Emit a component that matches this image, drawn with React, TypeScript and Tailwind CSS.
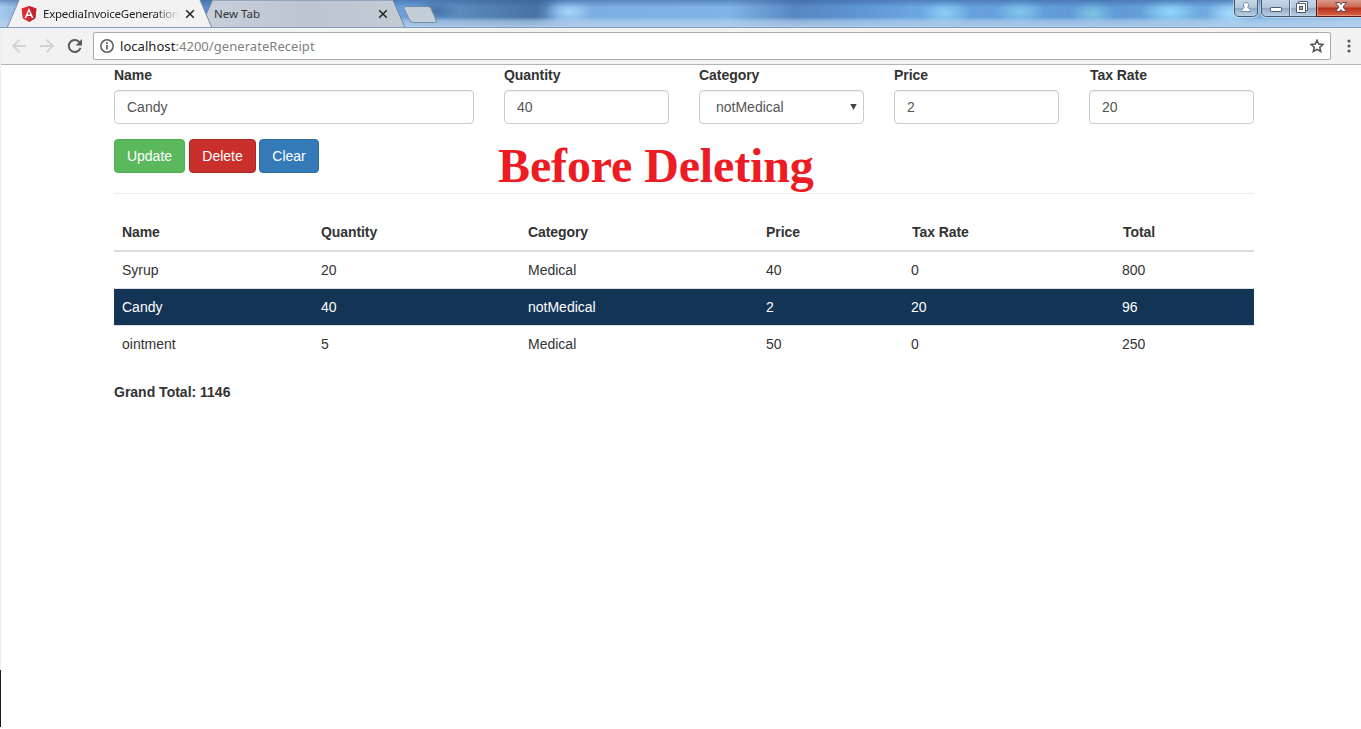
import React from "react";

const fields = [
  { label: "Name", value: "Candy" },
  { label: "Quantity", value: "40" },
  { label: "Category", value: "notMedical", select: true },
  { label: "Price", value: "2" },
  { label: "Tax Rate", value: "20" },
];

const headers = ["Name", "Quantity", "Category", "Price", "Tax Rate", "Total"];

const rows = [
  { cells: ["Syrup", "20", "Medical", "40", "0", "800"], selected: false },
  { cells: ["Candy", "40", "notMedical", "2", "20", "96"], selected: true },
  { cells: ["ointment", "5", "Medical", "50", "0", "250"], selected: false },
];

function CloseIcon() {
  return (
    <svg width="10" height="10" viewBox="0 0 10 10" className="shrink-0">
      <path d="M1.2 1.2L8.8 8.8M8.8 1.2L1.2 8.8" stroke="#222" strokeWidth="1.5" />
    </svg>
  );
}

function AngularIcon() {
  return (
    <svg width="16" height="16" viewBox="0 0 16 16" className="shrink-0">
      <path d="M8 0L15.4 2.6L14.3 12.3L8 15.9L1.7 12.3L.6 2.6Z" fill="#dd2c33" />
      <path d="M8 0L15.4 2.6L14.3 12.3L8 15.9Z" fill="#c3252e" />
      <path d="M8 2L3.5 12.1H5.3L6.2 9.9H9.8L10.7 12.1H12.5ZM8 5.3L9.2 8.4H6.8Z" fill="#fff" fillRule="evenodd" />
    </svg>
  );
}

function WindowButtons() {
  return (
    <svg width="131" height="20" viewBox="0 0 131 20" className="shrink-0">
      <defs>
        <linearGradient id="glass" x1="0" y1="0" x2="0" y2="1">
          <stop offset="0" stopColor="#c6d7e7" />
          <stop offset=".48" stopColor="#b4c9dc" />
          <stop offset=".52" stopColor="#8fa9c3" />
          <stop offset="1" stopColor="#bcd3e8" />
        </linearGradient>
        <linearGradient id="red" x1="0" y1="0" x2="0" y2="1">
          <stop offset="0" stopColor="#dda08f" />
          <stop offset=".45" stopColor="#cc6b55" />
          <stop offset=".52" stopColor="#b8301a" />
          <stop offset="1" stopColor="#d96a4c" />
        </linearGradient>
      </defs>
      <path d="M3.5 -1V12Q3.5 17.5 8.5 17.5H22.5Q28.5 17.5 28.5 12V-1Z" fill="#e1edf8" />
      <path d="M4.5 -1V12Q4.5 16.5 9 16.5H22.5Q27.5 16.5 27.5 12V-1Z" fill="url(#glass)" stroke="#47576b" />
      <path d="M30.5 -1V12Q30.5 17.5 36 17.5H131V-1Z" fill="#e1edf8" />
      <path d="M31.5 -1V12Q31.5 16.5 36.5 16.5H86.5V-1Z" fill="url(#glass)" stroke="#47576b" />
      <path d="M59.5 0V16" stroke="#56677c" />
      <path d="M60.5 0V16" stroke="#dbe7f2" />
      <path d="M86.5 -1V16.5H132V-1Z" fill="url(#red)" stroke="#5b1c17" />
      <path d="M87.5 0V15.5H131" stroke="#eaa893" strokeOpacity=".7" fill="none" />
      <path d="M16 2.5C18.2 2.5 18.9 4.1 18.4 6Q18 7.2 17.6 7.5Q20.5 8.2 20.5 11.5H11.5Q11.5 8.2 14.4 7.5Q14 7.2 13.6 6C13.1 4.1 13.8 2.5 16 2.5Z" fill="#fff" stroke="#76879b" />
      <rect x="40.5" y="7.5" width="11" height="4" rx=".7" fill="#fff" stroke="#505a6a" />
      <path d="M68.5 1.5H77.5V10.5H75.5V12.5H66.5V3.5H68.5Z" fill="#fff" stroke="#505a6a" />
      <path d="M68.5 3.5H75.5V10.5" fill="none" stroke="#505a6a" />
      <rect x="69.5" y="6.5" width="3" height="3" fill="#9eb0c3" stroke="#505a6a" />
      <path d="M105.5 2.5H109.5L111 4.5L112.5 2.5H116.5L113 7L116.5 11.5H112.5L111 9.5L109.5 11.5H105.5L109 7Z" fill="#fff" stroke="#5c4650" />
    </svg>
  );
}

function TabStrip() {
  return (
    <header className="relative flex h-7 items-start overflow-hidden border-b border-[#809dbd] bg-[linear-gradient(to_bottom,rgba(50,90,150,.5)_0,rgba(90,130,180,0)_7px,rgba(184,210,237,0)_17px,rgba(184,210,237,.6)_21px,rgba(184,210,237,.85)_27px),radial-gradient(ellipse_24px_14px_at_569px_12px,#a6d6f9,transparent),radial-gradient(ellipse_26px_14px_at_945px_13px,#8dd0f7,transparent),radial-gradient(ellipse_26px_14px_at_1020px_12px,#82c6ee,transparent),radial-gradient(ellipse_24px_13px_at_1093px_14px,#80c4e4,transparent),radial-gradient(ellipse_30px_14px_at_1170px_12px,#92d8fb,transparent),radial-gradient(ellipse_24px_15px_at_1230px_14px,#a5dcfd,transparent),radial-gradient(ellipse_24px_10px_at_436px_11px,rgba(50,90,140,.6),transparent),linear-gradient(100deg,#aacdf0_0,#91b7e0_20px,#5c8ec9_200px,#6a9fdc_400px,#5686b6_470px,#4773a2_530px,#6c9fd6_552px,#7caee2_575px,#80b4e8_720px,#5787bf_785px,#5c93d2_840px,#6ba6e1_900px,#5e98d5_1090px,#79b2e4_1230px,#a3c4e5_1361px)]">
      <svg width="450" height="28" viewBox="0 0 450 28" className="absolute left-0 top-0">
        <defs>
          <linearGradient id="idle" x1="0" x2="1">
            <stop offset="0" stopColor="#c6cfda" />
            <stop offset=".5" stopColor="#bcc5d0" />
            <stop offset="1" stopColor="#c3ccd5" />
          </linearGradient>
        </defs>
        <path d="M212.5 0H393L405 27.5H211L206 14.5Z" fill="url(#idle)" stroke="#6681a2" />
        <path d="M7 28L19 0H200L212 28Z" fill="#f2f2f2" />
        <path d="M7 28L19 0M200 0L212 28" stroke="#7890ac" fill="none" />
        <path d="M405.5 6.5H428Q430 6.5 431 8.5L436 20Q437 22.5 434.5 22.5H413Q410.5 22.5 409.5 20L404 8.5Q403.5 6.5 405.5 6.5Z" fill="#c3cdd8" stroke="#748aa5" />
      </svg>
      <div className="relative flex h-7 w-[205px] shrink-0 items-center pl-[21px] pr-[10px] font-['Noto_Sans',sans-serif] text-[11.5px] text-[#222]">
        <AngularIcon />
        <span className="ml-1.5 w-[135px] overflow-hidden whitespace-nowrap tracking-[-0.25px] [mask-image:linear-gradient(to_right,black_112px,transparent_137px)]">
          ExpediaInvoiceGeneration
        </span>
        <span className="ml-[7px] flex">
          <CloseIcon />
        </span>
      </div>
      <div className="relative flex h-7 w-[195px] shrink-0 items-center justify-between pl-[9px] pr-[12px] font-['Noto_Sans',sans-serif] text-[11.5px] text-[#333]">
        <span>New Tab</span>
        <CloseIcon />
      </div>
      <div className="relative ml-auto flex">
        <WindowButtons />
      </div>
    </header>
  );
}

function Toolbar() {
  return (
    <div className="flex h-[37px] items-center border-b border-[#b4b4b4] bg-[#f2f2f2] pl-[11px]">
      <svg width="72" height="18" viewBox="0 0 72 18" fill="none" className="shrink-0">
        <path d="M15 9H2.5M8.5 2.7L2.2 9L8.5 15.3" stroke="#d2d2d2" strokeWidth="1.9" />
        <path d="M29 9H41.5M35.5 2.7L41.800 9L35.5 15.3" stroke="#d2d2d2" strokeWidth="1.9" />
        <path d="M68.6 5.4A6 6 0 1 0 69.5 10.7" stroke="#5a5a5a" strokeWidth="2" />
        <path d="M71 2V8.4H64.6Z" fill="#5a5a5a" />
      </svg>
      <div className="ml-[10px] flex h-7 w-[1238px] items-center rounded-[2px] border border-[#aaa] bg-white pl-[6px] pr-[6px]">
        <svg width="14" height="14" viewBox="0 0 14 14" fill="none">
          <circle cx="7" cy="7" r="6.2" stroke="#5a5a5a" strokeWidth="1.5" />
          <path d="M7 6V10.5M7 3.3V4.9" stroke="#5a5a5a" strokeWidth="1.7" />
        </svg>
        <span className="ml-[6px] whitespace-nowrap font-['Noto_Sans',sans-serif] text-[13px] tracking-[0.05px] text-[#808080]">
          <span className="text-[#222]">localhost</span>:4200/generateReceipt
        </span>
        <svg width="14" height="14" viewBox="0 0 14 14" className="ml-auto">
          <path d="M7 1.2L8.7 5.1L13 5.5L9.8 8.3L10.7 12.5L7 10.3L3.3 12.5L4.2 8.3L1 5.5L5.3 5.1Z" fill="none" stroke="#505050" strokeWidth="1.5" />
        </svg>
      </div>
      <svg width="4" height="14" viewBox="0 0 4 14" fill="#5a5a5a" className="ml-4">
        <circle cx="2" cy="2" r="1.6" />
        <circle cx="2" cy="7" r="1.6" />
        <circle cx="2" cy="12" r="1.6" />
      </svg>
    </div>
  );
}

export default function App() {
  return (
    <div className="relative h-[729px] w-[1361px] overflow-hidden bg-white font-['Liberation_Sans',Arial,sans-serif] text-[14px] leading-5 text-[#333]">
      <TabStrip />
      <Toolbar />
      <main className="relative ml-[114px] w-[1140px]">
        <div className="grid grid-cols-[360px_165px_165px_165px_165px] gap-x-[30px]">
          {fields.map((f) => (
            <div key={f.label}>
              <div className={"mb-[5px] font-bold tracking-[-0.05px] " + (f.label === "Tax Rate" ? "pl-px" : "")}>{f.label}</div>
              <div
                className={
                  "flex h-[34px] items-center justify-between rounded-[4px] border border-[#ccc] text-[#555] shadow-[inset_0_1px_1px_rgba(0,0,0,0.075)] " +
                  (f.select ? "pl-4 pr-[6px]" : "px-3")
                }
              >
                <span>{f.value}</span>
                {f.select && (
                  <svg width="7" height="6" viewBox="0 0 7 6">
                    <path d="M.3 0H6.7L3.5 6Z" fill="#444" />
                  </svg>
                )}
              </div>
            </div>
          ))}
        </div>
        <div className="mt-[15px] flex text-white">
          <button className="h-[34px] w-[71px] rounded-[4px] border border-[#4cae4c] bg-[#5cb85c]">Update</button>
          <button className="ml-1 h-[34px] w-[67px] rounded-[4px] border border-[#ac2925] bg-[#c9302c]">Delete</button>
          <button className="ml-[3px] h-[34px] w-[60px] rounded-[4px] border border-[#2e6da4] bg-[#337ab7]">Clear</button>
        </div>
        <div className="mt-5 border-t border-[#eee]" />
        <div className="mt-5">
          <div className="grid h-[38px] grid-cols-[199px_207px_238px_146px_211px_139px] border-b-2 border-[#ddd] font-bold tracking-[-0.08px]">
            {headers.map((h) => (
              <div key={h} className="px-2 pt-2">{h}</div>
            ))}
          </div>
          {rows.map((r, i) => (
            <div
              key={r.cells[0]}
              className={
                "grid grid-cols-[199px_207px_238px_145px_211px_140px] " +
                (i > 0 ? "h-[37px] border-t border-[#ddd] " : "h-9 ") +
                (r.selected ? "bg-[#143456] text-white" : "")
              }
            >
              {r.cells.map((c, j) => (
                <div key={j} className="px-2 py-2">{c}</div>
              ))}
            </div>
          ))}
        </div>
        <div className="mt-5 font-bold">Grand Total: 1146</div>
        <div className="absolute left-[384px] top-[73px] whitespace-nowrap font-['Liberation_Serif','Times_New_Roman',serif] text-[48px] font-bold leading-[56px] tracking-[-0.13px] text-[#ed1c24]">
          Before Deleting
        </div>
      </main>
      <div className="absolute left-0 top-[28px] h-[642px] w-px bg-[#e8effb]" />
      <div className="absolute left-0 top-[670px] h-[57px] w-px bg-[#151b27]" />
    </div>
  );
}
